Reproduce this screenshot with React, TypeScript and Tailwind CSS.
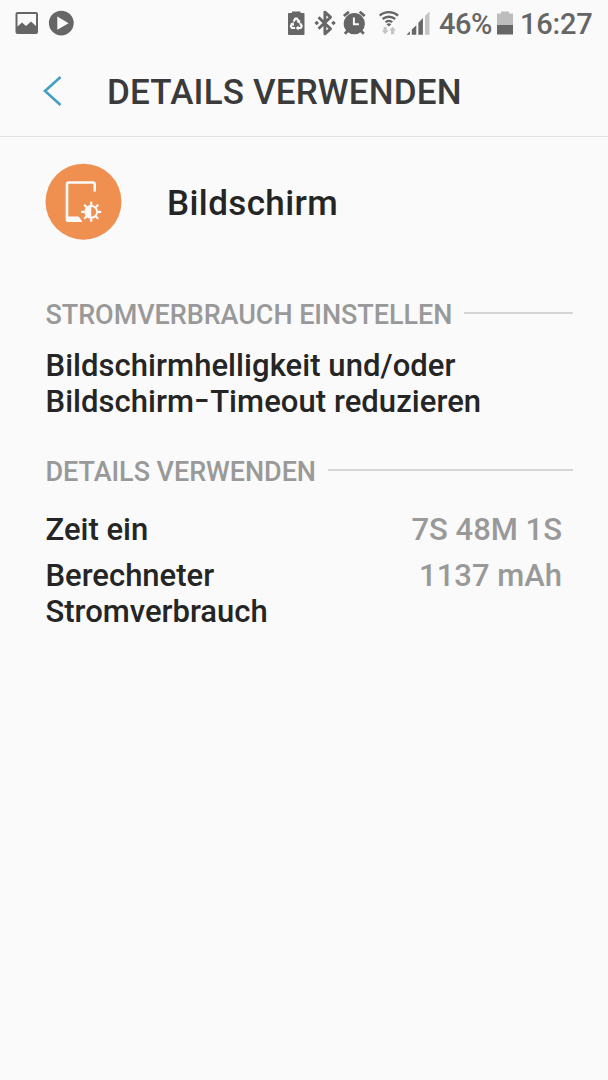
import type { ReactNode } from "react";

function StatusBar() {
  return (
    <div className="flex h-[46px] items-center text-[29px] font-medium text-[#666666]">
      <svg width="64" height="46" viewBox="12 0 64 46" className="ml-3 shrink-0" fill="#666666">
        <path
          fillRule="evenodd"
          d="M17.500 12H36a2 2 0 0 1 2 2v18a2 2 0 0 1-2 2H17.500a2 2 0 0 1-2-2V14a2 2 0 0 1 2-2ZM17.500 14v12.500l4.500-4 4 3.500 5-4.500 5 4.500V14Z"
        />
        <path
          fillRule="evenodd"
          d="M61.300 10.700a12.400 12.400 0 1 1 0 24.800 12.400 12.400 0 0 1 0-24.800ZM57.300 16.500v13.300l11.300-6.600Z"
        />
      </svg>

      <svg width="150" height="46" viewBox="284 0 150 46" className="ml-[208px] shrink-0" fill="#666666">
        {/* battery with recycle arrows */}
        <path d="M292 11.500h8.500V13h3a1 1 0 0 1 1 1v20a1 1 0 0 1-1 1H289a1 1 0 0 1-1-1V14a1 1 0 0 1 1-1h3Z" />
        <g fill="none" stroke="#fafafa" strokeWidth="2.200">
          <path d="M293.600 21.500 295.300 18.700h1.600l1.900 3" />
          <path d="M300.200 23.200 301.700 26l-1 2H298" />
          <path d="M295.100 28h-3.200l-1-2 1.600-2.800" />
        </g>
        <path d="m300.300 19.800-.3 4-3.300-1.900ZM298.500 25.500v5l-2.800-2.500ZM290.200 24l3.500-2 .3 4Z" fill="#fafafa" />

        {/* bluetooth */}
        <path
          d="m318.500 17.200 12 11.600-5.600 5V12.200l5.600 5-12 11.600"
          fill="none"
          stroke="#666666"
          strokeWidth="2.900"
          strokeLinejoin="round"
        />
        <path d="m316.700 20.700 2.300 2.300-2.300 2.300-2.300-2.300ZM333.500 20.700l2.300 2.300-2.300 2.300-2.300-2.300Z" />

        {/* alarm clock */}
        <circle cx="354.300" cy="23.700" r="10.600" />
        <g fill="none" stroke="#666666" strokeWidth="2.800">
          <path d="m343.900 16 5-4.200M359.700 11.800l5 4.200M348 30.500l-3.200 3.200M360.600 30.500l3.200 3.200" />
        </g>
        <path d="M353.900 17.500v6.700h5" fill="none" stroke="#fafafa" strokeWidth="2" />

        {/* wifi */}
        <g fill="none" stroke="#666666" strokeWidth="2.300">
          <path d="M379.700 15.600c5.300-4.600 13.100-4.600 18.400 0M382.600 19c3.700-3 8.900-3 12.600 0M385.500 22.200c2-1.600 4.800-1.600 6.800 0" />
        </g>
        <path d="m386.500 24.200 2.400 2.300 2.400-2.300a3.600 3.600 0 0 0-4.800 0Z" />
        <path
          d="M383.600 27h3.200v3.400h1.900l-3.500 3.800-3.500-3.800h1.900ZM391 34.200h3.200v-3.600h1.800l-3.400-3.800-3.400 3.800h1.800Z"
          fill="#c4c4c4"
        />

        {/* signal */}
        <path d="M406.500 34.700h3.400v-3.500ZM411.800 34.700h4.500v-9.500l-4.500 4.200ZM418.400 34.700h4.500V18l-4.500 4.700Z" />
        <path d="M425 34.700h4.500V11.500l-4.500 4.500Z" fill="#c4c4c4" />
      </svg>

      <span className="ml-[5px] w-[53px] pt-[3px] whitespace-nowrap tracking-[-0.5px]">46%</span>
      <svg width="18" height="46" viewBox="496 0 18 46" className="ml-[4px] shrink-0">
        <path d="M501 11.500h8V13.500h4V25h-16V13.500h4Z" fill="#bdbdbd" />
        <path d="M497 25h16v9.500h-16Z" fill="#666666" />
      </svg>
      <span className="ml-[6px] pt-[3px] whitespace-nowrap tracking-[-0.2px]">16:27</span>
    </div>
  );
}

function ScreenIcon() {
  return (
    <svg width="76" height="76" viewBox="0 0 76 76" className="-ml-px overflow-visible">
      <circle cx="38.500" cy="37.700" r="38" fill="#f09050" />
      <path
        d="M49.200 27.500V20.500a2 2 0 0 0-2-2H23.500a2 2 0 0 0-2 2V53"
        transform="translate(0.500 0)"
        fill="none"
        stroke="#fafafa"
        strokeWidth="2.600"
      />
      <path d="M20.700 52.500h13l3.800 5.500H22.700a2 2 0 0 1-2-2Z" fill="#fafafa" />
      <g transform="translate(46.200 47.800)">
        <circle r="5.900" fill="none" stroke="#fafafa" strokeWidth="2" />
        <path d="M0-6.300a6.300 6.300 0 0 0 0 12.600Z" fill="#fafafa" />
        <path
          d="M0-10v3.500M0 6.500V10M-10 0h3.500M6.500 0H10M-7-7l2.500 2.500M7-7 4.500-4.500M-7 7l2.500-2.500M7 7 4.500 4.500"
          stroke="#fafafa"
          strokeWidth="2.200"
        />
      </g>
    </svg>
  );
}

function SectionTitle({ children }: { children: ReactNode }) {
  return (
    <div className="flex h-8 items-center">
      <h2 className="whitespace-nowrap text-[27px] leading-8 font-medium tracking-[-0.06px] text-[#999999]">
        {children}
      </h2>
      <div className="mr-[35px] mb-1 ml-3 h-0.5 flex-1 bg-[#d5d5d5]" />
    </div>
  );
}

const details = [
  { label: "Zeit ein", value: "7S 48M 1S" },
  { label: "Berechneter Stromverbrauch", value: "1137 mAh" },
];

export default function App() {
  return (
    <div className="h-[1080px] w-[608px] overflow-hidden bg-[#fafafa] font-['Roboto',sans-serif] text-[#252525]">
      <StatusBar />

      <header className="flex h-[91px] items-center border-b border-[#e2e2e2] pl-[42px]">
        <svg width="20" height="32" viewBox="0 0 20 32" fill="none">
          <path d="M18.500 2 3 16l15.500 14" stroke="#439fc4" strokeWidth="2.600" />
        </svg>
        <h1 className="ml-[45px] pt-[3px] text-[35px] leading-[41px] font-medium tracking-[0.17px] text-[#3a3a3a]">
          DETAILS VERWENDEN
        </h1>
      </header>

      <main className="pt-[27px] pl-[46px]">
        <div className="flex h-[76px] items-center">
          <ScreenIcon />
          <p className="ml-[46px] pt-[2px] text-[35px] leading-[41px] font-medium tracking-[0.4px]">
            Bildschirm
          </p>
        </div>

        <section className="mt-[59px] -ml-[0.5px]">
          <SectionTitle>STROMVERBRAUCH EINSTELLEN</SectionTitle>
          <p className="mt-[17px] text-[31px] leading-9 font-medium tracking-[0.06px]">
            Bildschirmhelligkeit und/oder
            <br />
            Bildschirm
            <span className="inline-block w-4 origin-center -translate-y-0.5 scale-x-[1.4] text-center">
              -
            </span>
            Timeout reduzieren
          </p>
        </section>

        <section className="mt-9 -ml-[0.5px]">
          <SectionTitle>DETAILS VERWENDEN</SectionTitle>
          <dl className="mt-6 mr-[46px] flex flex-col gap-[10px] text-[31px] leading-9 font-medium">
            {details.map((item) => (
              <div key={item.label} className="flex justify-between">
                <dt className="w-[260px]">{item.label}</dt>
                <dd className="whitespace-nowrap text-[#999999]">{item.value}</dd>
              </div>
            ))}
          </dl>
        </section>
      </main>
    </div>
  );
}
